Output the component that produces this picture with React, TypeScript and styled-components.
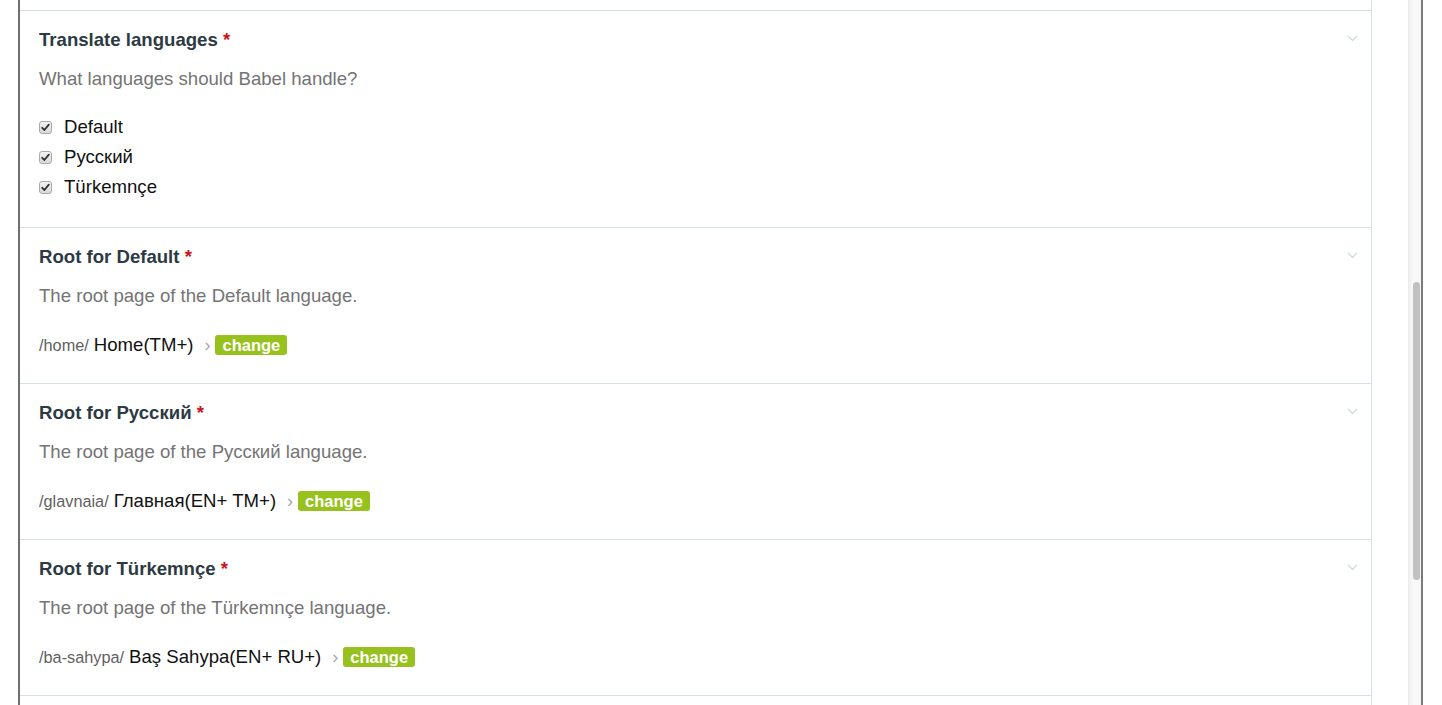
import styled, { createGlobalStyle } from "styled-components"

const GlobalStyle = createGlobalStyle`
  html, body {
    margin: 0;
    padding: 0;
    background: #ffffff;
    overflow: hidden;
  }
  body {
    font-family: "Liberation Sans", Helvetica, Arial, sans-serif;
  }
`

interface RootField {
  language: string
  slug: string
  page: string
}

const languages = ["Default", "Русский", "Türkemnçe"]

const roots: RootField[] = [
  { language: "Default", slug: "/home/", page: "Home(TM+)" },
  { language: "Русский", slug: "/glavnaia/", page: "Главная(EN+ TM+)" },
  { language: "Türkemnçe", slug: "/ba-sahypa/", page: "Baş Sahypa(EN+ RU+)" },
]

const Chevron = () => (
  <ChevronIcon width="11" height="7" viewBox="0 0 11 7">
    <path d="M0.8 0.8 L5.5 5.5 L10.2 0.8" fill="none" stroke="#c9d6dc" strokeWidth="1.2" />
  </ChevronIcon>
)

const CheckMark = () => (
  <svg width="9" height="9" viewBox="0 0 9 9">
    <path d="M1.2 4.8 L3.4 7 L7.8 1.6" fill="none" stroke="#333" strokeWidth="1.8" strokeLinecap="round" strokeLinejoin="round" />
  </svg>
)

const FieldHeader: React.FC<{ title: string }> = ({ title }) => (
  <Header>
    <Title>
      {title} <Required>*</Required>
    </Title>
    <Chevron />
  </Header>
)

const App = () => {
  return (
    <>
      <GlobalStyle />
      <Page>
        <Frame>
          <FieldList>
            <CutSection />

            <Field>
              <FieldHeader title="Translate languages" />
              <Description>What languages should Babel handle?</Description>
              <CheckList>
                {languages.map((lang) => (
                  <CheckRow key={lang}>
                    <CheckBox>
                      <CheckMark />
                    </CheckBox>
                    <CheckLabel>{lang}</CheckLabel>
                  </CheckRow>
                ))}
              </CheckList>
            </Field>

            {roots.map((root) => (
              <Field key={root.language}>
                <FieldHeader title={`Root for ${root.language}`} />
                <Description>The root page of the {root.language} language.</Description>
                <PathRow>
                  <Slug>{root.slug}</Slug>
                  <PageName>{root.page}</PageName>
                  <Arrow>›</Arrow>
                  <ChangeButton>change</ChangeButton>
                </PathRow>
              </Field>
            ))}
          </FieldList>

          <ScrollTrack>
            <ScrollThumb />
          </ScrollTrack>
        </Frame>
      </Page>
    </>
  )
}

const Page = styled.div`
  display: flex;
  height: 705px;
  padding-left: 18px;
  box-sizing: border-box;
`

const Frame = styled.div`
  display: flex;
  justify-content: space-between;
  width: 1405px;
  height: 705px;
  border-left: 2px solid #6f6f6f;
  border-right: 2px solid #7a7a7a;
  box-sizing: border-box;
  overflow: hidden;
`

const FieldList = styled.div`
  display: flex;
  flex-direction: column;
  width: 1352px;
  border-right: 1px solid #d6e1e5;
  box-sizing: border-box;
`

const CutSection = styled.div`
  height: 10px;
  flex-shrink: 0;
  border-bottom: 1px solid #d6e1e5;
`

const Field = styled.section`
  display: flex;
  flex-direction: column;
  flex-shrink: 0;
  padding: 17px 0 23px 19px;
  border-bottom: 1px solid #d6e1e5;
`

const Header = styled.div`
  display: flex;
  align-items: center;
  justify-content: space-between;
  padding-right: 13px;
  height: 24px;
`

const ChevronIcon = styled.svg`
  margin-top: -3px;
`

const Title = styled.h3`
  margin: 0;
  font-size: 18.6px;
  line-height: 24px;
  font-weight: bold;
  color: #2c3a43;
`

const Required = styled.span`
  color: #c4161c;
`

const Description = styled.p`
  margin: 15px 0 0;
  font-size: 18.6px;
  line-height: 24px;
  color: #747474;
`

const CheckList = styled.div`
  display: flex;
  flex-direction: column;
  margin: 21px 0 2px;
`

const CheckRow = styled.label`
  display: flex;
  align-items: center;
  height: 30px;
`

const CheckBox = styled.span`
  display: flex;
  align-items: center;
  justify-content: center;
  width: 11px;
  height: 11px;
  border: 1px solid #a9a9a9;
  border-radius: 3px;
  background: linear-gradient(#f3f3f3, #d9d9d9);
  margin-right: 12px;
`

const CheckLabel = styled.span`
  font-size: 18.6px;
  color: #111;
`

const PathRow = styled.div`
  display: flex;
  align-items: center;
  height: 30px;
  margin-top: 22px;
`

const Slug = styled.span`
  font-size: 16.3px;
  color: #5f5f5f;
`

const PageName = styled.span`
  margin-left: 5px;
  font-size: 18.6px;
  color: #111;
`

const Arrow = styled.span`
  margin-left: 11px;
  font-size: 18px;
  line-height: 1;
  color: #a8a8a8;
`

const ChangeButton = styled.span`
  margin-left: 5px;
  padding: 0 7px;
  height: 20px;
  line-height: 20px;
  border-radius: 3px;
  background: #97c11c;
  color: #ffffff;
  font-size: 16.5px;
  font-weight: bold;
`

const ScrollTrack = styled.div`
  width: 13px;
  height: 705px;
  padding: 282px 2px 0 4px;
  box-sizing: border-box;
  background: linear-gradient(to right, #f0f0f0, #fafafa 40%, #f7f7f7);
  border-left: 1px solid #ececec;
`

const ScrollThumb = styled.div`
  width: 7px;
  height: 298px;
  border-radius: 4px;
  background: #c1c1c1;
`

export default App
